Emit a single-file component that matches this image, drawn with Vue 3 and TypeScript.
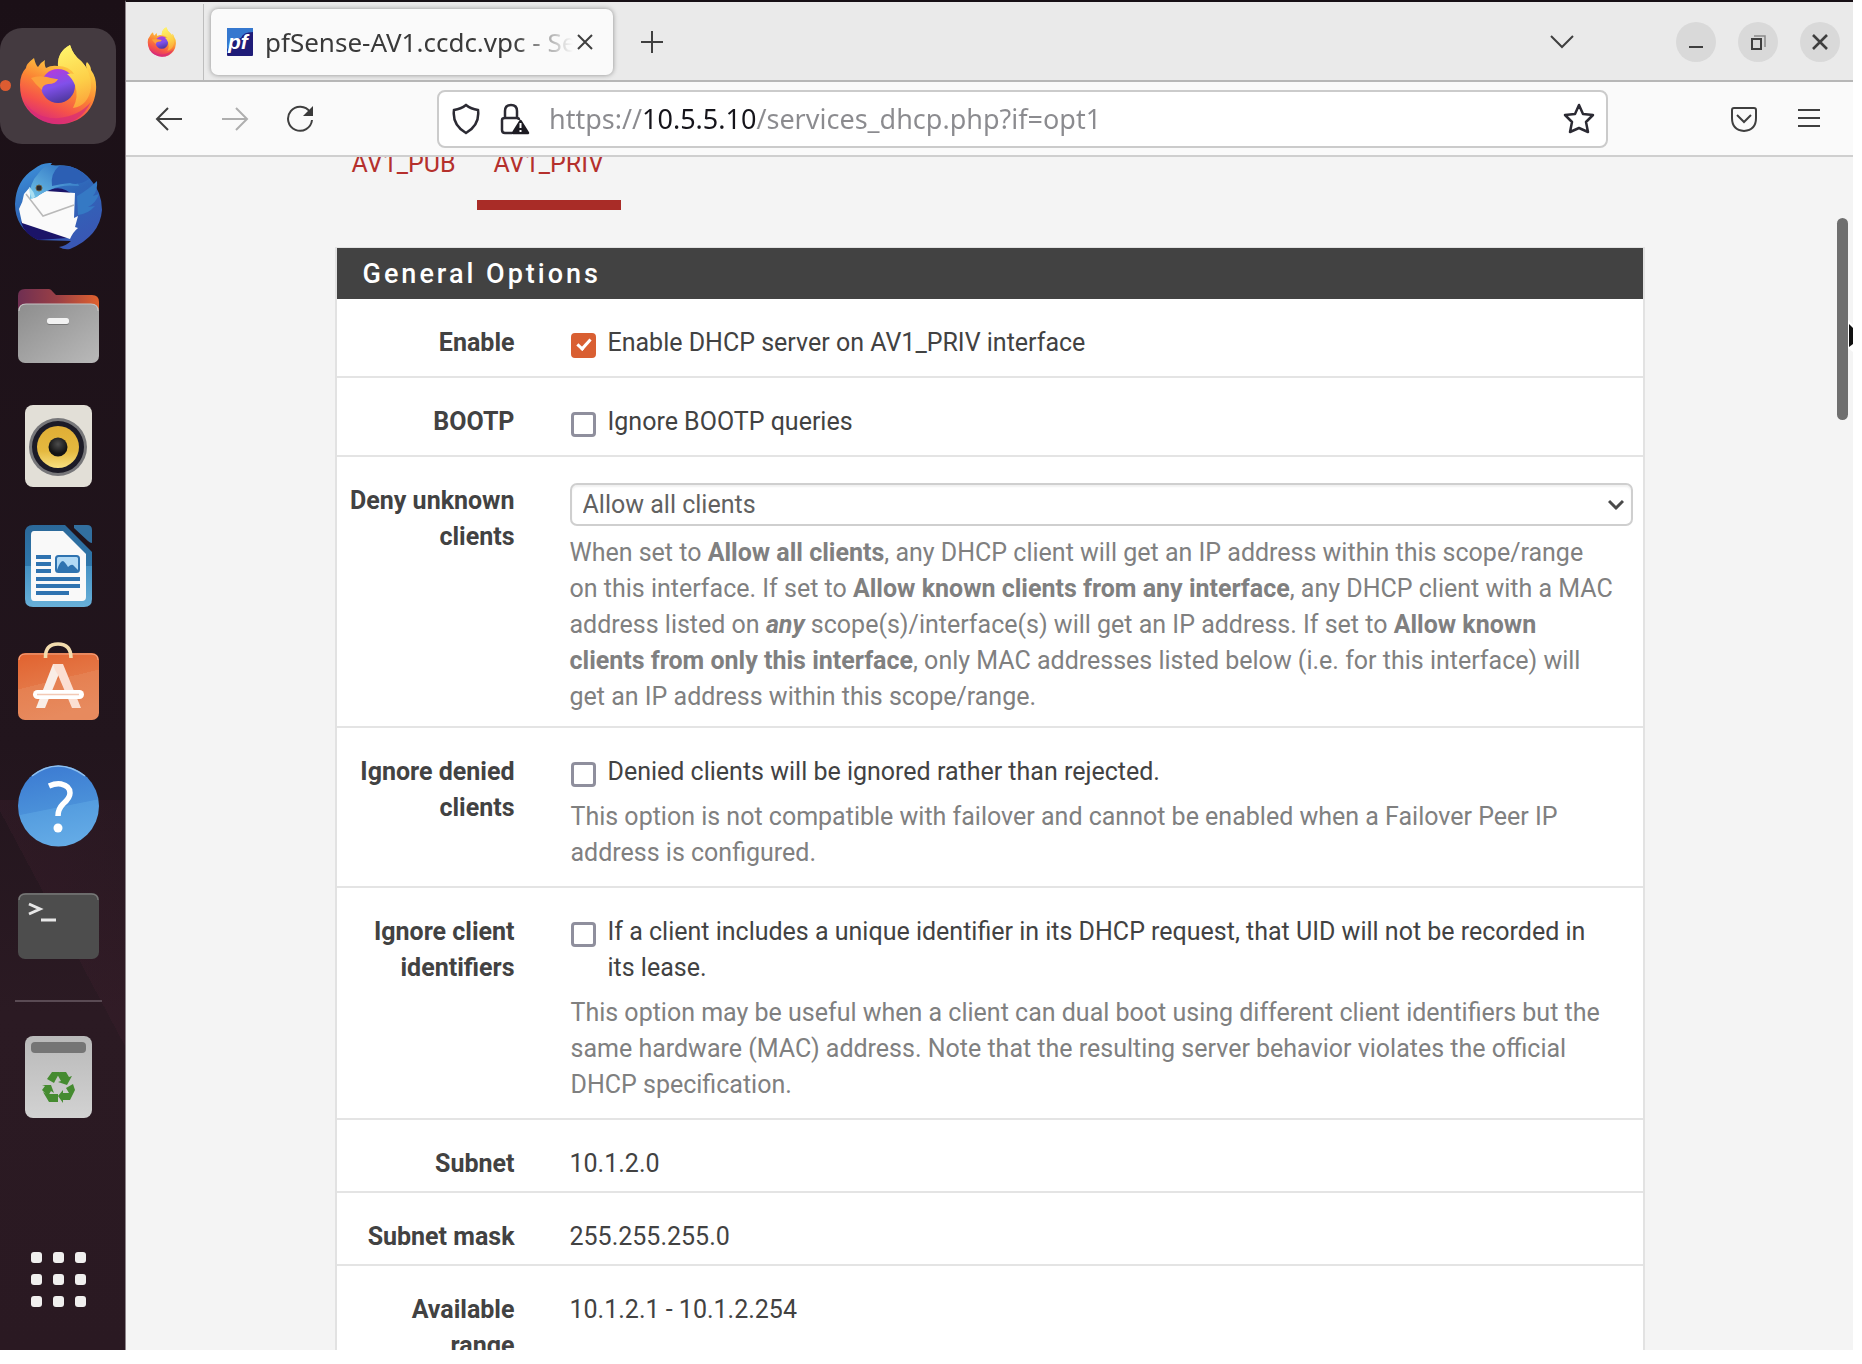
<script setup lang="ts">
import { ref } from 'vue'

interface StaticRow {
  label: string
  value: string
}

const address = ref('https://10.5.5.10/services_dhcp.php?if=opt1')
const enabled = ref(true)
const ignoreBootp = ref(false)
const ignoreDenied = ref(false)
const ignoreIds = ref(false)
const denyMode = ref('all')

const staticRows: StaticRow[] = [
  { label: 'Subnet', value: '10.1.2.0' },
  { label: 'Subnet mask', value: '255.255.255.0' },
  { label: 'Available range', value: '10.1.2.1 - 10.1.2.254' },
]

const gridDots = [31, 53, 75].flatMap((y) => [31, 53, 75].map((x) => ({ x, y })))
</script>

<template>
  <div class="desktop">
    <aside class="dock" aria-label="Dock">
      <button class="slot active" aria-label="Firefox">
        <span class="running"></span>
        <svg viewBox="0 0 116 116">
          <defs>
            <linearGradient id="ffBody" x1="0.75" y1="0" x2="0.35" y2="1">
              <stop offset="0" stop-color="#fff36a" />
              <stop offset="0.3" stop-color="#fdc23f" />
              <stop offset="0.55" stop-color="#fb8434" />
              <stop offset="0.78" stop-color="#f5514b" />
              <stop offset="1" stop-color="#d9297c" />
            </linearGradient>
            <linearGradient id="ffGlobe" x1="0.3" y1="0" x2="0.6" y2="1">
              <stop offset="0" stop-color="#b43bdc" />
              <stop offset="0.5" stop-color="#8150ea" />
              <stop offset="1" stop-color="#4c379c" />
            </linearGradient>
            <linearGradient id="ffFlame" x1="0.4" y1="0" x2="0.6" y2="1">
              <stop offset="0" stop-color="#fff36a" />
              <stop offset="0.6" stop-color="#fdcf48" />
              <stop offset="1" stop-color="#fca33b" />
            </linearGradient>
            <symbol id="firefox" viewBox="18 15 81 83">
              <path fill="url(#ffBody)" d="M34 30Q36 38 38 39Q41 34 45 32Q44 37 46 40Q51 37 58 38Q57 24 70 17Q73 27 81 33Q86 38 87 42Q85 36 87 34Q91 38 91 42Q97 50 96 62Q94 83 77 92Q58 101 39 91Q20 80 20 57Q20 46 26 40Q26 36 34 30Z" />
              <path fill="#d62c78" d="M24 73Q37 92 59 90Q79 88 91 74Q80 96 58 96Q35 96 24 73Z" opacity="0.7" />
              <circle cx="58" cy="58" r="17" fill="url(#ffGlobe)" />
              <path fill="url(#ffFlame)" d="M58 38Q57 24 70 17Q73 27 81 33Q92 44 91 60Q88 78 73 80Q79 69 75 57Q72 50 67 46Q72 45 74 46Q69 38 58 38Z" />
              <path fill="#fca03c" d="M31 50Q38 47 47 49Q55 51 58 51Q56 56 48 56Q42 57 42 62Q35 56 31 50Z" />
            </symbol>
          </defs>
          <use href="#firefox" x="18" y="15" width="81" height="83" />
        </svg>
      </button>

      <button class="slot" aria-label="Thunderbird">
        <svg viewBox="0 0 116 116">
          <defs>
            <linearGradient id="tbBody" x1="0.2" y1="0" x2="0.7" y2="1">
              <stop offset="0" stop-color="#3d8fd8" />
              <stop offset="0.45" stop-color="#2f66b8" />
              <stop offset="1" stop-color="#3a56b4" />
            </linearGradient>
            <linearGradient id="tbHead" x1="0" y1="1" x2="1" y2="0">
              <stop offset="0" stop-color="#6fc3e8" />
              <stop offset="1" stop-color="#2667bd" />
            </linearGradient>
          </defs>
          <path fill="url(#tbBody)" d="M38 92Q15 80 15 56Q16 32 34 21Q42 14 52 15Q50 17 51 18Q75 14 90 31Q102 44 102 62Q100 88 70 101Q64 102 59 99Q66 98 71 93Z" />
          <path fill="#1b1468" d="M44 45Q60 34 74 48L68 90L38 92Q24 86 21 74Q40 60 44 45Z" />
          <path fill="#fafafa" d="M30 39L24 46Q23 54 19 61L22 75L70 91Q73 84 78 80L75 79L78 68L74 70L75 45L46 43L34 50Z" />
          <path fill="none" stroke="#b9b9b9" stroke-width="1.5" d="M26 46L43 68L74 57" />
          <path fill="url(#tbHead)" d="M30 51Q29 35 38 26Q46 14 56 18Q73 20 79 38Q62 36 52 41Q42 44 37 49Q34 50 30 51Z" />
          <path fill="#2c5fb4" d="M59 18Q77 16 89 31Q79 38 70 35Q60 36 52 38Q50 26 59 18Z" />
          <path fill="#3579c4" d="M77 48Q88 42 97 33Q98 42 93 48L99 46Q96 55 88 59L95 58Q88 66 78 67Z" />
          <circle cx="39" cy="40" r="3" fill="#2b2a2f" stroke="#6b6348" />
          <path fill="#a9dff2" d="M29 39Q34 43 35 49L32 51Q29 45 29 39Z" />
        </svg>
      </button>

      <button class="slot" aria-label="Files">
        <svg viewBox="0 0 116 116">
          <defs>
            <linearGradient id="flBack">
              <stop offset="0" stop-color="#6f2f52" />
              <stop offset="0.5" stop-color="#9c4045" />
              <stop offset="1" stop-color="#e0612e" />
            </linearGradient>
            <linearGradient id="flFront" x1="0" y1="0" x2="1" y2="1">
              <stop offset="0" stop-color="#8d8d8d" />
              <stop offset="1" stop-color="#b9b9b9" />
            </linearGradient>
          </defs>
          <path fill="url(#flBack)" d="M18 50V28Q18 21 25 21H49Q51 21 53 24L56 27H92Q99 27 99 34V50Z" />
          <rect x="18" y="36" width="81" height="59" rx="7" fill="url(#flFront)" />
          <path fill="none" stroke="#c4c4c4" stroke-width="1.2" d="M19 43Q19 36 26 36H91Q98 36 98 43" />
          <rect x="47" y="51" width="22" height="6" rx="2.5" fill="#777" />
          <rect x="47" y="50" width="22" height="6" rx="2.5" fill="#f2f2f2" />
        </svg>
      </button>

      <button class="slot" aria-label="Rhythmbox">
        <svg viewBox="0 0 116 116">
          <defs>
            <linearGradient id="rbCone" x1="0" y1="0" x2="0" y2="1">
              <stop offset="0" stop-color="#e0ae35" />
              <stop offset="0.6" stop-color="#e5b940" />
              <stop offset="1" stop-color="#f8e180" />
            </linearGradient>
            <radialGradient id="rbCap" cy="0.35">
              <stop offset="0" stop-color="#4c4c4c" />
              <stop offset="1" stop-color="#141414" />
            </radialGradient>
          </defs>
          <rect x="25" y="17" width="67" height="82" rx="8" fill="#e2dfd7" />
          <circle cx="58" cy="59" r="29" fill="#77777a" />
          <circle cx="58" cy="59" r="26" fill="#1c1b27" />
          <circle cx="58" cy="59" r="21" fill="url(#rbCone)" />
          <circle cx="58" cy="59" r="9.5" fill="url(#rbCap)" />
        </svg>
      </button>

      <button class="slot" aria-label="LibreOffice Writer">
        <svg viewBox="0 0 116 116">
          <defs>
            <linearGradient id="lwBody" x1="0" y1="0" x2="0" y2="1">
              <stop offset="0" stop-color="#2b6899" />
              <stop offset="0.5" stop-color="#2f77ab" />
              <stop offset="0.5" stop-color="#4592c4" />
              <stop offset="1" stop-color="#68b0d9" />
            </linearGradient>
          </defs>
          <path fill="url(#lwBody)" d="M33 17H65L92 44V91Q92 99 84 99H33Q25 99 25 91V25Q25 17 33 17Z" />
          <path fill="#326f9f" d="M74 17H87Q92 17 92 22V35Q90 35 88 33L74 20Z" />
          <path fill="#f9f9f9" d="M34 23H63L86 46V89Q86 93 82 93H34Q31 93 31 89V27Q31 23 34 23Z" />
          <path stroke="#2f73b0" stroke-width="4" d="M36 49H51M36 56H51M36 63H51M36 71H80M36 78H80M36 85H69" />
          <rect x="56" y="48" width="23" height="16" rx="2.5" fill="#b2daf5" stroke="#2f73b0" stroke-width="2" />
          <path fill="#2f73b0" d="M57 62Q60 53 63 53Q65 54 68 59Q72 55 74 58L79 63V64H57Z" />
        </svg>
      </button>

      <button class="slot" aria-label="Ubuntu Software">
        <svg viewBox="0 0 116 116">
          <defs>
            <linearGradient id="swBag" x1="0" y1="0" x2="0.3" y2="1">
              <stop offset="0" stop-color="#e1622f" />
              <stop offset="0.5" stop-color="#e47645" />
              <stop offset="0.5" stop-color="#e58051" />
              <stop offset="1" stop-color="#e78a5e" />
            </linearGradient>
          </defs>
          <rect x="18" y="25" width="81" height="67" rx="7" fill="url(#swBag)" />
          <path fill="none" stroke="#f0a583" stroke-width="1.2" d="M19 32Q19 26 26 26H91Q98 26 98 32" />
          <path fill="none" stroke="#f3dcae" stroke-width="3.6" d="M45.500 30Q45 16 58 16Q71 16 71 30" />
          <path fill="#f9ede6" d="M63 36L45 80H36L53 36Z" />
          <path fill="#fbdfd2" d="M53 36H63L81 80H72L58 47L55 42Z" />
          <rect x="33" y="62" width="51" height="9" rx="4.500" fill="#fff" />
          <path stroke="#f3c9b5" stroke-width="1.5" d="M37 66.500H79" />
        </svg>
      </button>

      <button class="slot" aria-label="Help">
        <svg viewBox="0 0 116 116">
          <defs>
            <linearGradient id="hpDisc" x1="0.3" y1="0" x2="0.5" y2="1">
              <stop offset="0" stop-color="#3c7bd2" />
              <stop offset="0.53" stop-color="#4a90d9" />
              <stop offset="0.54" stop-color="#559ddf" />
              <stop offset="1" stop-color="#64abe6" />
            </linearGradient>
          </defs>
          <circle cx="58.500" cy="58" r="40.500" fill="url(#hpDisc)" />
          <path fill="none" stroke="#8fc0ee" stroke-width="1.5" d="M32 28Q58 8 85 28" />
          <path fill="none" stroke="#fff" stroke-width="5.5" d="M49 38Q56 35 61 36Q70 38 70 45Q70 50 63 56Q58 61 58 68" />
          <circle cx="58" cy="80" r="4.500" fill="#fff" />
        </svg>
      </button>

      <button class="slot" aria-label="Terminal">
        <svg viewBox="0 0 116 116">
          <rect x="18" y="25" width="81" height="66" rx="7" fill="#4d4d4d" />
          <path fill="none" stroke="#777" stroke-width="1.5" d="M19 32Q19 26 26 26H91Q98 26 98 32" />
          <path fill="none" stroke="#e8e8e8" stroke-width="3" d="M29 36L40 41L29 46M41 52H56" />
        </svg>
      </button>

      <hr class="divider" />

      <button class="slot" aria-label="Trash">
        <svg viewBox="0 0 116 116">
          <defs>
            <linearGradient id="trBin" x1="0" y1="0" x2="0" y2="1">
              <stop offset="0" stop-color="#b9b9b9" />
              <stop offset="1" stop-color="#d2d2d2" />
            </linearGradient>
          </defs>
          <rect x="25" y="17" width="67" height="82" rx="8" fill="url(#trBin)" />
          <rect x="31" y="23" width="55" height="11" rx="4" fill="#757575" />
          <g fill="#458b30">
            <path d="M47 60L52 53H60L55 62L54 64Z" />
            <path d="M60 53H66L69 58L72 57L67 66L58 63L61 62L57 55Z" />
            <path d="M66 69L73 65L75 71L70 81H63V84L58 77L63 71V74H69Z" />
            <path d="M58 75V83H49L43 73L47 75Z" />
            <path d="M42 66L51 66L54 74L51 72L48 77L42 71L45 67Z" />
          </g>
        </svg>
      </button>

      <button class="slot apps" aria-label="Show Applications">
        <svg viewBox="0 0 116 116">
          <rect v-for="dot in gridDots" :key="`${dot.x}-${dot.y}`" :x="dot.x" :y="dot.y" width="11" height="11" rx="3" fill="#f0efee" />
        </svg>
      </button>
    </aside>

    <div class="browser">
      <header class="tabbar">
        <button class="pinned" aria-label="Firefox View">
          <svg viewBox="0 0 30 32"><use href="#firefox" width="30" height="32" /></svg>
        </button>
        <div class="tab">
          <svg class="favicon" viewBox="0 0 26 28">
            <rect width="26" height="28" rx="1" fill="#1f1c78" />
            <path fill="#3578cf" d="M0 0H26V4Q16 4 14 10Q4 12 0 22Z" />
            <text x="1" y="21" font-family="Liberation Sans, sans-serif" font-size="21" font-weight="700" font-style="italic" fill="#fff">pf</text>
          </svg>
          <span class="title">pfSense-AV1.ccdc.vpc - Se</span>
          <button class="close" aria-label="Close tab">
            <svg viewBox="0 0 16 16"><path d="M1 1L15 15M15 1L1 15" /></svg>
          </button>
        </div>
        <button class="newtab" aria-label="New tab">
          <svg viewBox="0 0 22 22"><path d="M11 0V22M0 11H22" /></svg>
        </button>
        <button class="list" aria-label="List all tabs">
          <svg viewBox="0 0 24 14"><path d="M1 1L12 12L23 1" /></svg>
        </button>
        <div class="window-buttons">
          <button aria-label="Minimize"><svg viewBox="0 0 40 40"><path d="M13 25H27" /></svg></button>
          <button aria-label="Restore">
            <svg viewBox="0 0 40 40"><path d="M14 17H23V27H14Z" /><path stroke="#8b8b8b" stroke-width="1.5" d="M16 14H27V25" /></svg>
          </button>
          <button aria-label="Close"><svg viewBox="0 0 40 40"><path stroke-width="2.6" d="M13 13L27 27M27 13L13 27" /></svg></button>
        </div>
      </header>

      <nav class="toolbar">
        <div class="nav-buttons">
          <button aria-label="Back"><svg viewBox="0 0 28 28"><path d="M13 3L2 14L13 25M2 14H27" /></svg></button>
          <button class="off" aria-label="Forward"><svg viewBox="0 0 28 28"><path d="M15 3L26 14L15 25M26 14H1" /></svg></button>
          <button aria-label="Reload">
            <svg viewBox="0 0 28 28"><path d="M23 7A12 12 0 1 0 25 15" /><path fill="#3a3a3a" stroke="none" d="M26 1V11H16Z" /></svg>
          </button>
        </div>
        <div class="urlbar">
          <svg class="shield" viewBox="0 0 28 32"><path d="M14 2Q19 6 26 7Q28 22 14 30Q0 22 2 7Q9 6 14 2Z" /></svg>
          <svg class="lock" viewBox="0 0 30 32">
            <path d="M12 30H5Q2 30 2 27V17Q2 15 5 15H17Q19 15 19 17M5 15V8Q5 2 11 2Q17 2 17 8V15" />
            <path fill="#1c1b22" stroke="#1c1b22" stroke-linejoin="round" d="M20.500 18L28 30H13Z" />
            <path stroke="#fff" stroke-width="2" d="M20.500 20V25M20.500 27V29" />
          </svg>
          <input v-model="address" class="address" type="text" aria-label="Address" spellcheck="false" />
          <button aria-label="Bookmark this page">
            <svg viewBox="0 0 32 32"><path stroke-linejoin="round" d="M16 2L20 11L30 12L23 19L25 29L16 25L7 29L9 19L2 12L12 11Z" /></svg>
          </button>
        </div>
        <div class="tools">
          <button aria-label="Save to Pocket">
            <svg viewBox="0 0 28 28"><path d="M4 3H24Q26 3 26 5V13Q26 25 14 26Q2 25 2 13V5Q2 3 4 3ZM7 10L14 17L21 10" /></svg>
          </button>
          <button aria-label="Open menu"><svg viewBox="0 0 28 28"><path d="M3 5H25M3 13H25M3 21H25" /></svg></button>
        </div>
      </nav>

      <main class="page">
        <div class="container">
          <ul class="tabs">
            <li><a href="#pub">AV1_PUB</a></li>
            <li><a href="#priv" class="current">AV1_PRIV</a></li>
          </ul>

          <section class="panel">
            <h2>General Options</h2>

            <div class="row">
              <span class="label">Enable</span>
              <div class="field">
                <label class="check"><input v-model="enabled" type="checkbox" /><span>Enable DHCP server on AV1_PRIV interface</span></label>
              </div>
            </div>

            <div class="row">
              <span class="label">BOOTP</span>
              <div class="field">
                <label class="check"><input v-model="ignoreBootp" type="checkbox" /><span>Ignore BOOTP queries</span></label>
              </div>
            </div>

            <div class="row select-row">
              <label class="label" for="deny">Deny unknown clients</label>
              <div class="field">
                <div class="select">
                  <select id="deny" v-model="denyMode">
                    <option value="all">Allow all clients</option>
                    <option value="any">Allow known clients from any interface</option>
                    <option value="this">Allow known clients from only this interface</option>
                  </select>
                  <svg viewBox="0 0 16 12"><path d="M1 2L8 9L15 2" /></svg>
                </div>
                <p class="help">
                  When set to <b>Allow all clients</b>, any DHCP client will get an IP address within this scope/range<br />
                  on this interface. If set to <b>Allow known clients from any interface</b>, any DHCP client with a MAC<br />
                  address listed on <b><i>any</i></b> scope(s)/interface(s) will get an IP address. If set to <b>Allow known<br />
                  clients from only this interface</b>, only MAC addresses listed below (i.e. for this interface) will<br />
                  get an IP address within this scope/range.
                </p>
              </div>
            </div>

            <div class="row">
              <span class="label">Ignore denied clients</span>
              <div class="field">
                <label class="check"><input v-model="ignoreDenied" type="checkbox" /><span>Denied clients will be ignored rather than rejected.</span></label>
                <p class="help">This option is not compatible with failover and cannot be enabled when a Failover Peer IP<br />address is configured.</p>
              </div>
            </div>

            <div class="row">
              <span class="label">Ignore client identifiers</span>
              <div class="field">
                <label class="check"><input v-model="ignoreIds" type="checkbox" /><span>If a client includes a unique identifier in its DHCP request, that UID will not be recorded in<br />its lease.</span></label>
                <p class="help">This option may be useful when a client can dual boot using different client identifiers but the<br />same hardware (MAC) address. Note that the resulting server behavior violates the official<br />DHCP specification.</p>
              </div>
            </div>

            <div v-for="row in staticRows" :key="row.label" class="row static">
              <span class="label">{{ row.label }}</span>
              <span class="field">{{ row.value }}</span>
            </div>
          </section>
        </div>
        <div class="scrollbar"></div>
        <svg class="pointer" viewBox="0 0 5 32"><path fill="#fff" d="M0 0L5 5V32L0 28Z" /><path fill="#111" d="M1 4L5 8V24L1 27Z" /></svg>
      </main>
    </div>
  </div>
</template>

<style>
body {
  margin: 0;
  background: #fff;
}
</style>

<style scoped>
.desktop {
  box-sizing: border-box;
  display: flex;
  height: 100vh;
  padding: 0 9px 14px 0;
  background: #fff;
}

button {
  display: flex;
  align-items: center;
  justify-content: center;
  padding: 0;
  border: 0;
  background: none;
}

svg {
  display: block;
  fill: none;
}

.dock {
  display: flex;
  flex: none;
  flex-direction: column;
  gap: 4px;
  box-sizing: border-box;
  width: 125px;
  padding: 28px 0 13px;
  background:
    linear-gradient(62deg, transparent 60%, rgba(60, 30, 44, 0.35) 60%, rgba(60, 30, 44, 0.2)) 0 800px / 100% 380px no-repeat,
    linear-gradient(#1b1017, #22151d 55%, #2b1a23 75%, #2a1922);
}

.slot {
  position: relative;
  flex: none;
  width: 116px;
  height: 116px;
  border-radius: 22px;
}

.slot svg {
  width: 116px;
  height: 116px;
}

.active {
  background: #443a40;
}

.running {
  position: absolute;
  top: 52px;
  left: 0;
  width: 11px;
  height: 11px;
  border-radius: 50%;
  background: #dd5c31;
}

.divider {
  flex: none;
  width: 87px;
  height: 2px;
  margin: 12px 0 13px 15px;
  border: 0;
  background: #5a4b54;
}

.apps {
  margin-top: auto;
}

.browser {
  display: flex;
  flex: 1;
  flex-direction: column;
  min-width: 0;
  border-top: 2px solid #171015;
  border-left: 1px solid #8d8489;
  font-family: "Noto Sans", "Open Sans", sans-serif;
  color: #3a3a3a;
}

.tabbar {
  display: flex;
  flex: none;
  align-items: center;
  height: 76px;
  padding-top: 2px;
  border-bottom: 2px solid #b7b7b7;
  background: #eaeaea;
}

.tabbar svg,
.toolbar svg {
  stroke: #3f3f3f;
  stroke-width: 2;
}

.pinned {
  width: 78px;
  height: 76px;
  border-right: 1px solid #bdbdbd;
}

.pinned svg {
  width: 30px;
  height: 32px;
  margin-right: 6px;
  stroke: none;
}

.tab {
  display: flex;
  align-items: center;
  box-sizing: border-box;
  width: 402px;
  height: 66px;
  margin-left: 7px;
  padding: 0 16px;
  border-radius: 7px;
  background: #fafafa;
  box-shadow: 0 0 5px rgba(0, 0, 0, 0.4);
}

.tab .favicon {
  flex: none;
  width: 26px;
  height: 28px;
  margin-right: 12px;
  stroke: none;
}

.title {
  flex: 1;
  overflow: hidden;
  font-size: 26px;
  line-height: 36px;
  white-space: nowrap;
  mask-image: linear-gradient(90deg, #000 calc(100% - 60px), transparent);
}

.close svg {
  width: 16px;
  height: 16px;
  margin: 0 4px;
}

.newtab {
  width: 46px;
  height: 46px;
  margin-left: 16px;
}

.newtab svg {
  width: 22px;
  height: 22px;
}

.list {
  width: 48px;
  height: 46px;
  margin: 0 90px 0 auto;
}

.list svg {
  width: 24px;
  height: 14px;
}

.window-buttons {
  display: flex;
  gap: 22px;
  margin-right: 13px;
}

.window-buttons button {
  width: 40px;
  height: 40px;
  border-radius: 50%;
  background: #d9d9d9;
}

.window-buttons svg {
  width: 40px;
  height: 40px;
}

.toolbar {
  display: flex;
  flex: none;
  align-items: center;
  height: 73px;
  border-bottom: 2px solid #cfcfcf;
  background: #fafafa;
}

.nav-buttons {
  display: flex;
  gap: 38px;
  width: 282px;
  padding-left: 29px;
}

.nav-buttons svg,
.tools svg {
  width: 28px;
  height: 28px;
}

.nav-buttons .off {
  opacity: 0.4;
}

.urlbar {
  display: flex;
  flex: 1;
  align-items: center;
  box-sizing: border-box;
  min-width: 0;
  height: 58px;
  padding: 0 11px 0 13px;
  border: 2px solid #cbcbcb;
  border-radius: 8px;
  background: #fff;
}

.toolbar .urlbar svg {
  flex: none;
  width: 32px;
  height: 32px;
  stroke: #2b2a33;
  stroke-width: 2.5;
}

.toolbar .urlbar .shield {
  width: 28px;
}

.toolbar .urlbar .lock {
  width: 30px;
  margin: 0 19px 0 20px;
}

/* The host part of the address is darker than the rest. */
.address {
  flex: 1;
  min-width: 0;
  padding: 0;
  border: 0;
  outline: 0;
  background: linear-gradient(90deg, #8b8b8f 94px, #15141a 94px, #15141a 208px, #8b8b8f 208px);
  background-clip: text;
  color: transparent;
  font: 27px/36px "Noto Sans", "Open Sans", sans-serif;
}

.tools {
  display: flex;
  gap: 37px;
  padding: 0 30px 0 122px;
}

.page {
  position: relative;
  flex: 1;
  min-height: 0;
  overflow: hidden;
  background: #f4f4f4;
  color: #424242;
  font: 25px/36px Roboto, sans-serif;
}

.container {
  max-width: 1310px;
  margin: -11px auto 0;
}

.tabs {
  display: flex;
  gap: 4px;
  margin: 0 0 37px;
  padding: 0;
  list-style: none;
}

.tabs a {
  display: block;
  padding: 0 17px 18px;
  border-bottom: 10px solid transparent;
  color: #b5302c;
  text-decoration: none;
}

.tabs .current {
  border-color: #a92c27;
}

.panel {
  border: 2px solid #e2e2e2;
  border-top-width: 1px;
  background: #fff;
}

.panel h2 {
  margin: 0;
  padding: 8px 26px 7px;
  background: #424242;
  color: #fff;
  font-size: 27px;
  font-weight: 500;
  line-height: 36px;
  letter-spacing: 3px;
}

.row {
  display: grid;
  grid-template-columns: 178px minmax(0, 1fr);
  gap: 55px;
  padding: 26px 10px 15px 0;
  border-bottom: 2px solid #e4e4e4;
}

.select-row {
  padding-bottom: 11px;
}

.static {
  padding-bottom: 9px;
}

.label {
  padding-left: 8px;
  font-weight: 700;
  text-align: right;
}

.check {
  display: flex;
  gap: 12px;
  padding-left: 1px;
}

.check input {
  position: relative;
  flex: none;
  box-sizing: border-box;
  width: 25px;
  height: 25px;
  margin: 8px 0 0;
  border: 3px solid #8f8f9d;
  border-radius: 4px;
  background: #fff;
  appearance: none;
}

.check input:checked {
  border-color: #d95f32;
  background: #d95f32;
}

.check input:checked::after {
  content: "";
  position: absolute;
  top: 0;
  left: 6px;
  width: 5px;
  height: 11px;
  border: solid #fff;
  border-width: 0 3px 3px 0;
  transform: rotate(42deg);
}

.help {
  margin: 9px 0 0;
  color: #808080;
}

.check + .help {
  padding-left: 1px;
}

.select {
  position: relative;
}

.select select {
  display: block;
  box-sizing: border-box;
  width: 100%;
  height: 43px;
  padding: 0 11px;
  border: 2px solid #cfcfcf;
  border-radius: 7px;
  background: #fff;
  box-shadow: inset 0 2px 2px rgba(0, 0, 0, 0.06);
  color: #616161;
  font: 25px/36px Roboto, sans-serif;
  appearance: none;
}

.select svg {
  position: absolute;
  top: 16px;
  right: 9px;
  width: 16px;
  height: 12px;
  stroke: #4a4a4a;
  stroke-width: 3;
  pointer-events: none;
}

.scrollbar {
  position: absolute;
  top: 61px;
  right: 5px;
  width: 11px;
  height: 202px;
  border-radius: 6px;
  background: #6f6f6f;
}

.pointer {
  position: absolute;
  top: 163px;
  right: 0;
  width: 5px;
  height: 32px;
}
</style>
